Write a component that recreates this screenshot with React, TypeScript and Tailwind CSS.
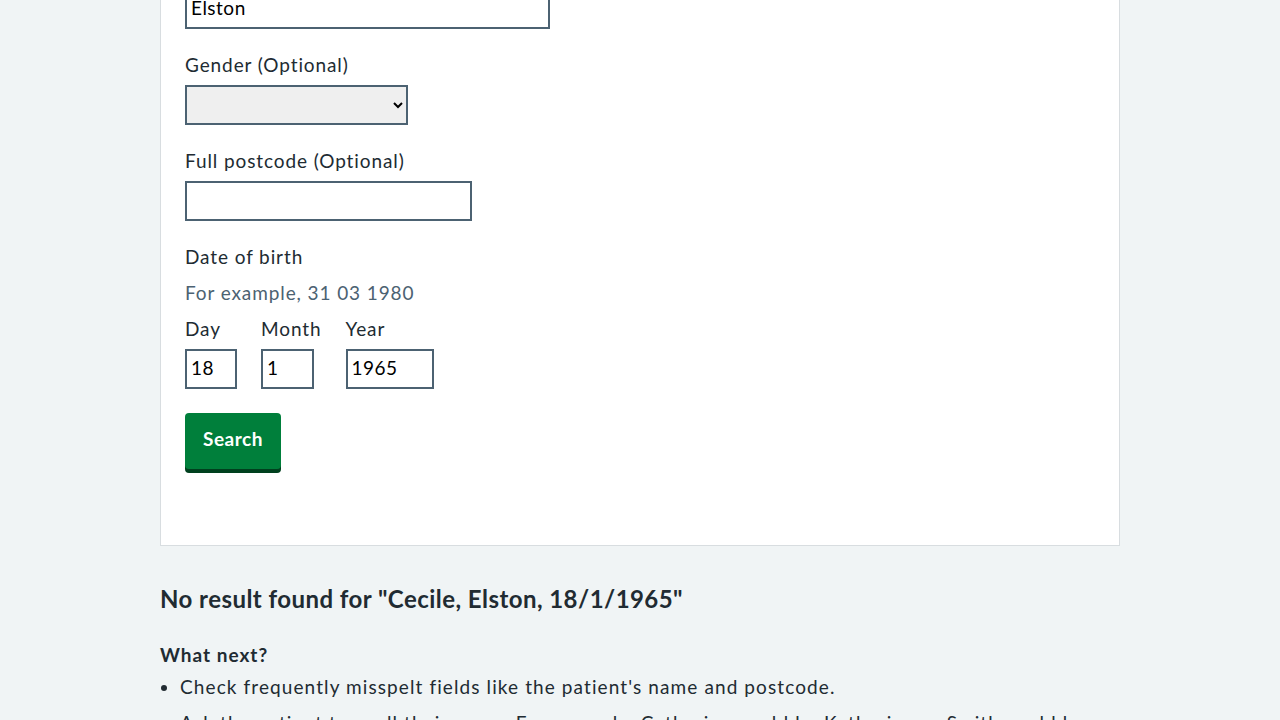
import React from 'react';

const FONT = "font-['Lato','Liberation_Sans',sans-serif]";

const inputClass =
  'h-10 border-2 border-[#4c6272] bg-white px-1 pb-1 text-[19px] leading-7 tracking-[0.5px] text-black outline-none';

interface DatePart {
  label: string;
  value: string;
  width: string;
}

const DATE_PARTS: DatePart[] = [
  { label: 'Day', value: '18', width: 'w-[52px]' },
  { label: 'Month', value: '1', width: 'w-[53px]' },
  { label: 'Year', value: '1965', width: 'w-[88px]' }
];

const App: React.FC = () => {
  return (
    <div className={`min-h-screen overflow-hidden bg-[#f0f4f5] text-[#212b32] ${FONT}`}>
      {/* Search form card */}
      <div className="mx-auto -mt-[12px] w-[960px] border border-[#d8dde0] bg-white px-6 pb-[76px] text-[19px] leading-7 tracking-[0.9px]">
        <input className={`${inputClass} w-[365px]`} defaultValue="Elston" />

        <div className="mt-[22px]">
          <label className="mb-1.5 block">Gender (Optional)</label>
          <select className="h-10 w-[223px] border-2 border-[#4c6272] bg-[#efefef] text-black">
            <option value=""></option>
            <option value="male">Male</option>
            <option value="female">Female</option>
          </select>
        </div>

        <div className="mt-[22px]">
          <label className="mb-1.5 block">Full postcode (Optional)</label>
          <input className={`${inputClass} w-[287px]`} defaultValue="" />
        </div>

        <div className="mt-[22px]">
          <div className="mb-2">Date of birth</div>
          <div className="mb-2 text-[#4c6272]">For example, 31 03 1980</div>
          <div className="flex gap-6">
            {DATE_PARTS.map((part) => (
              <div key={part.label} className="flex flex-col">
                <label className="mb-1.5">{part.label}</label>
                <input className={`${inputClass} ${part.width}`} defaultValue={part.value} />
              </div>
            ))}
          </div>
        </div>

        <button className="mt-6 rounded border-2 border-transparent bg-[#007f3b] px-4 pt-[10px] pb-[14px] font-bold tracking-[0.5px] text-white shadow-[0_4px_0_#00401e]">
          Search
        </button>
      </div>

      {/* Results */}
      <div className="mx-auto w-[960px] pt-[37px]">
        <h2 className="text-[24px] font-bold leading-8 tracking-[0.45px]">
          No result found for "Cecile, Elston, 18/1/1965"
        </h2>
        <h3 className="mt-[26px] text-[19px] font-bold leading-7 tracking-[1px]">What next?</h3>
        <ul className="mt-1 list-disc pl-5 text-[19px] leading-7 tracking-[1.1px]">
          <li className="mb-2">Check frequently misspelt fields like the patient's name and postcode.</li>
          <li className="mb-2">
            Ask the patient to spell their name. For example, Catherine could be Katherine or Smith could be Smyth.
          </li>
        </ul>
      </div>
    </div>
  );
};

export default App;
